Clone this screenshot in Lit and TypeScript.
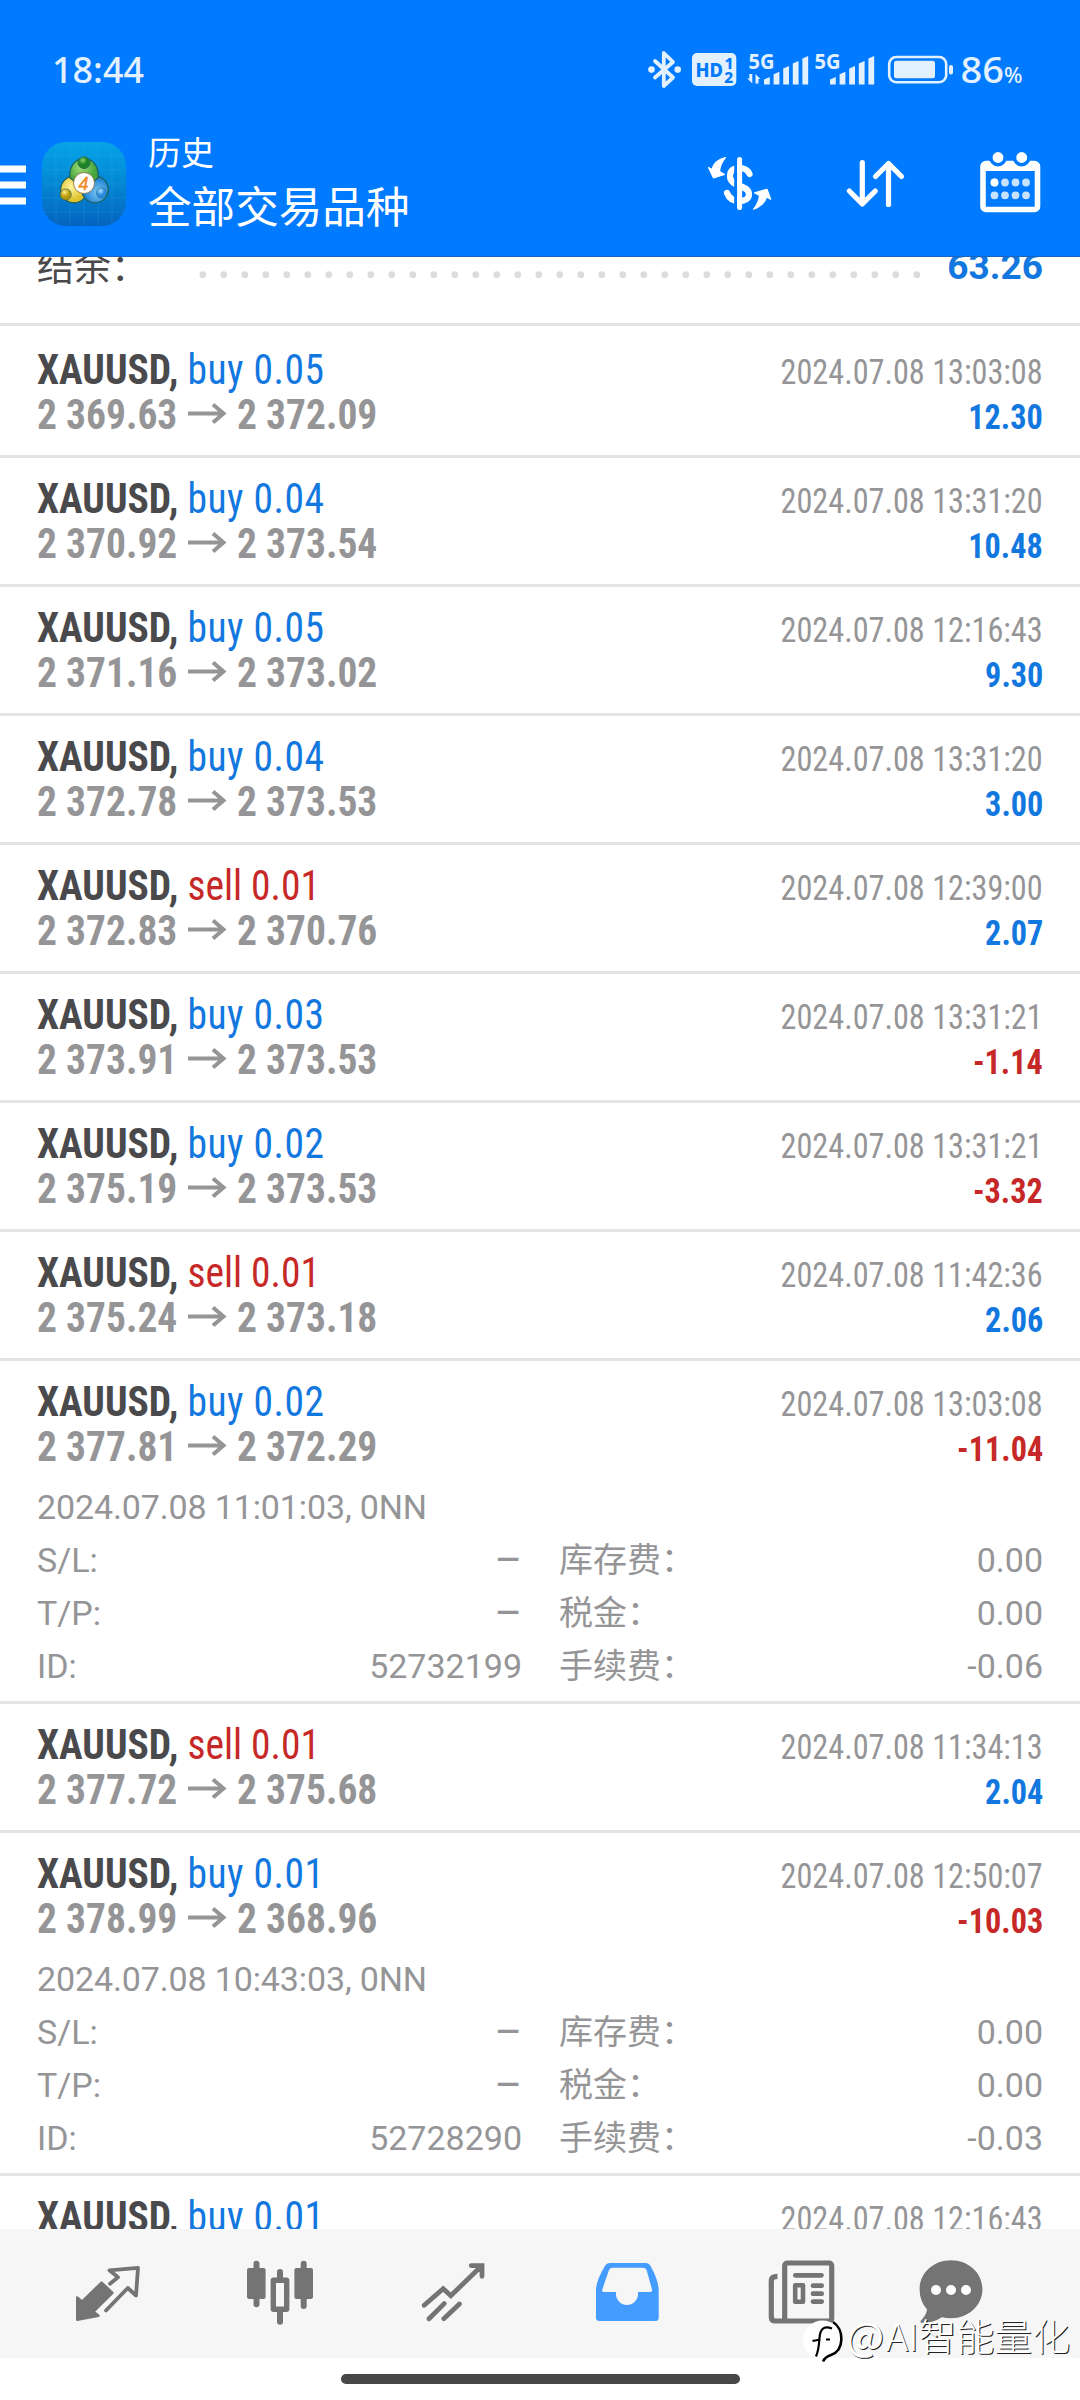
import { LitElement, html, css, svg, nothing } from "lit";
import { customElement, property } from "lit/decorators.js";

interface Detail {
  opened: string;
  id: string;
  fee: string;
}

interface Deal {
  side: "buy" | "sell";
  lots: string;
  from: string;
  to: string;
  time: string;
  profit: string;
  detail?: Detail;
}

const DEALS: Deal[] = [
  { side: "buy", lots: "0.05", from: "2 369.63", to: "2 372.09", time: "13:03:08", profit: "12.30" },
  { side: "buy", lots: "0.04", from: "2 370.92", to: "2 373.54", time: "13:31:20", profit: "10.48" },
  { side: "buy", lots: "0.05", from: "2 371.16", to: "2 373.02", time: "12:16:43", profit: "9.30" },
  { side: "buy", lots: "0.04", from: "2 372.78", to: "2 373.53", time: "13:31:20", profit: "3.00" },
  { side: "sell", lots: "0.01", from: "2 372.83", to: "2 370.76", time: "12:39:00", profit: "2.07" },
  { side: "buy", lots: "0.03", from: "2 373.91", to: "2 373.53", time: "13:31:21", profit: "-1.14" },
  { side: "buy", lots: "0.02", from: "2 375.19", to: "2 373.53", time: "13:31:21", profit: "-3.32" },
  { side: "sell", lots: "0.01", from: "2 375.24", to: "2 373.18", time: "11:42:36", profit: "2.06" },
  {
    side: "buy", lots: "0.02", from: "2 377.81", to: "2 372.29", time: "13:03:08", profit: "-11.04",
    detail: { opened: "2024.07.08 11:01:03, 0NN", id: "52732199", fee: "-0.06" },
  },
  { side: "sell", lots: "0.01", from: "2 377.72", to: "2 375.68", time: "11:34:13", profit: "2.04" },
  {
    side: "buy", lots: "0.01", from: "2 378.99", to: "2 368.96", time: "12:50:07", profit: "-10.03",
    detail: { opened: "2024.07.08 10:43:03, 0NN", id: "52728290", fee: "-0.03" },
  },
];

const PARTIAL = { side: "buy", lots: "0.01", time: "12:16:43" } as Deal;

@customElement("status-bar")
class StatusBar extends LitElement {
  static styles = css`
    :host { display: flex; justify-content: space-between; height: 112px; padding: 0 50px; }
    svg { display: block; }
    text { font-family: "Noto Sans", sans-serif; }
  `;

  private bars(x: number) {
    const tops = [77, 71.7, 66, 61, 56];
    return tops.map((t, i) => svg`<path d="M${x + i * 9.6} ${t + 2.5}l5.8 -2.5V84.5h-5.8z" />`);
  }

  render() {
    return html`
      <svg width="110" height="112" viewBox="50 0 110 112" fill="#e3f1ff">
        <text x="52" y="83" font-size="37" font-weight="550" textLength="92" lengthAdjust="spacingAndGlyphs">18:44</text>
      </svg>
      <svg width="390" height="112" viewBox="640 0 390 112" fill="#e3f1ff">
        <path d="M655 61L673 77.5L663.8 86V53L673 62L655 77.5" fill="none" stroke="#e3f1ff" stroke-width="3.8" stroke-linejoin="round" stroke-linecap="round" />
        <circle cx="651.5" cy="69.6" r="3.3" />
        <circle cx="677.7" cy="69.6" r="3.3" />
        <rect x="692" y="53" width="44.3" height="33" rx="5" />
        <g fill="#007aff" font-weight="800">
          <text x="695.5" y="76.5" font-size="19.5" textLength="27.5" lengthAdjust="spacingAndGlyphs">HD</text>
          <text x="724.5" y="69" font-size="15.5">1</text>
          <text x="724.3" y="82.5" font-size="15.5">2</text>
        </g>
        <g font-size="21" font-weight="700">
          <text x="748.5" y="68.5" textLength="26" lengthAdjust="spacingAndGlyphs">5G</text>
          <text x="814.5" y="68.5" textLength="26" lengthAdjust="spacingAndGlyphs">5G</text>
        </g>
        <path d="M752.3 74v9.5l-5 -5h2V74zM755.5 83.5V74l5 5h-2v4.5z" />
        ${this.bars(764)}${this.bars(830)}
        <rect x="889.2" y="57" width="57" height="25.2" rx="7" fill="none" stroke="#e3f1ff" stroke-width="2.6" />
        <rect x="894" y="60.7" width="41" height="17.6" rx="2.5" />
        <rect x="949" y="65" width="4" height="9.5" rx="2" />
        <text x="960.5" y="83" font-size="37" font-weight="500" textLength="43.5" lengthAdjust="spacingAndGlyphs">86</text>
        <text x="1004" y="82.5" font-size="21" font-weight="500" textLength="18.5" lengthAdjust="spacingAndGlyphs">%</text>
      </svg>
    `;
  }
}

@customElement("title-bar")
class TitleBar extends LitElement {
  static styles = css`
    :host { display: flex; height: 145px; color: #fff; }
    svg { display: block; flex: none; }
    .titles {
      flex: 1;
      display: flex;
      flex-direction: column;
      padding: 17px 0 0 18px;
      font-family: "Noto Sans CJK SC", sans-serif;
    }
    .section { font-size: 33px; line-height: 44px; }
    .scope { font-size: 43.6px; line-height: 62px; }
  `;

  render() {
    return html`
      <svg width="130" height="145" viewBox="0 112 130 145">
        <defs>
          <linearGradient id="tile" x1="0" y1="0" x2="0" y2="1">
            <stop offset="0" stop-color="#05a3e9" />
            <stop offset="0.5" stop-color="#0487d3" />
            <stop offset="1" stop-color="#0463c0" />
          </linearGradient>
          <radialGradient id="green" cx="0.4" cy="0.4"><stop offset="0" stop-color="#a4dd78" /><stop offset="1" stop-color="#45a63e" /></radialGradient>
          <radialGradient id="yellow" cx="0.4" cy="0.4"><stop offset="0" stop-color="#fff5a0" /><stop offset="1" stop-color="#dfc22c" /></radialGradient>
          <radialGradient id="sky" cx="0.6" cy="0.6"><stop offset="0" stop-color="#7fcaf5" /><stop offset="1" stop-color="#2184d2" /></radialGradient>
          <radialGradient id="ball-green" cx="0.4" cy="0.3"><stop offset="0" stop-color="#8ad46a" /><stop offset="0.7" stop-color="#1f8226" /></radialGradient>
          <radialGradient id="ball-yellow" cx="0.4" cy="0.3"><stop offset="0" stop-color="#fff08c" /><stop offset="0.8" stop-color="#b99a0c" /></radialGradient>
          <radialGradient id="ball-sky" cx="0.4" cy="0.3"><stop offset="0" stop-color="#a8e2ff" /><stop offset="0.8" stop-color="#2a8be0" /></radialGradient>
        </defs>
        <path d="M0 165.6h26v7H0zM0 181.6h26v7H0zM0 197.4h26v7H0z" fill="#fff" />
        <rect x="42" y="142" width="84" height="84" rx="24" fill="url(#tile)" />
        <path d="M56 144v80M70 142v84M84 142v84M98 142v84M112 144v80M43 156h82M42 170h84M42 184h84M42 198h84M43 212h82" stroke="#4fc3ee" stroke-opacity="0.16" stroke-width="1" />
        <g stroke="#1b5f58" stroke-width="1.2">
          <circle cx="74" cy="189.5" r="13.3" fill="url(#yellow)" />
          <circle cx="95" cy="189.5" r="13.3" fill="url(#sky)" />
          <path d="M70 178C68.500 166 76 158.500 84 158.500C92 158.500 99.500 166 98 178L93 182H75z" fill="url(#green)" />
          <circle cx="84" cy="162.7" r="6" fill="url(#ball-green)" stroke-width="0.6" />
          <circle cx="65.700" cy="194.5" r="5.6" fill="url(#ball-yellow)" stroke-width="0.600" />
          <circle cx="101.500" cy="193" r="5.2" fill="url(#ball-sky)" stroke-width="0.400" />
        </g>
        <circle cx="84" cy="183" r="10.5" fill="#fff" stroke="#8c6a3c" stroke-width="0.8" />
        <text x="83.5" y="189.5" font-family="Liberation Sans, sans-serif" font-size="18" font-style="italic" fill="#f08a24" stroke="#f08a24" stroke-width="0.4" text-anchor="middle">4</text>
      </svg>
      <div class="titles">
        <div class="section">历史</div>
        <div class="scope">全部交易品种</div>
      </div>
      <svg width="390" height="145" viewBox="690 112 390 145" fill="none" stroke="#fff" stroke-linecap="round" stroke-linejoin="round">
        <path d="M749.5 174C748 170 744 168 739 168C733 168 730 171 730 176C730 182 735 184 740 186C746 188.5 749 190 749 194.5C749 199 744 201 739 201C733 201 729 198 727 193" stroke-width="6.2" />
        <path d="M735.7 158v51" stroke="#007aff" stroke-width="3" stroke-linecap="butt" />
        <path d="M739.6 159.5v48" stroke-width="5" />
        <path d="M725.5 157.5C718 159 713 164 712 169.5L708.5 167.5L713.5 178L724.5 174.5L719.5 171.5C720 166 722 162 725.5 157.5z" fill="#fff" stroke-width="1.2" />
        <path d="M753.5 209.3C760.5 207 765.5 202 766.5 197L770.7 199.3L767 189.3L754.5 192.8L759.5 195.5C759 201 757 205 753.5 209.3z" fill="#fff" stroke-width="1.2" />
        <path d="M862.3 162.5V203M849.3 191l13 13l13 -13M888.5 204.5V164M875.5 176.5l13 -13l13 13" stroke-width="5.2" />
        <rect x="983" y="163.5" width="54.5" height="46" rx="3" stroke-width="5.6" />
        <path d="M983 164h54.5v7H983z" fill="#fff" stroke="none" />
        <g fill="#fff" stroke="#007aff" stroke-width="3.5">
          <circle cx="998" cy="157.5" r="7.2" />
          <circle cx="1021.7" cy="157.5" r="7.2" />
        </g>
        <path d="M994.5 182.5h0M1005 182.5h0M1015.5 182.5h0M1026 182.5h0M994.5 195.3h0M1005 195.3h0M1015.5 195.3h0M1026 195.3h0" stroke-width="7.8" stroke="#c6e2ff" />
        <path d="M994.5 182.5h0" stroke-width="7.8" />
      </svg>
    `;
  }
}

@customElement("deal-row")
class DealRow extends LitElement {
  @property({ attribute: false }) deal!: Deal;

  static styles = css`
    :host {
      display: block;
      flex: none;
      box-sizing: border-box;
      border-bottom: 3px solid #e3e3e4;
      padding: 18px 37px 0;
      height: 129px;
      color: #959597;
      font-family: Roboto, "Noto Sans CJK SC", sans-serif;
      white-space: nowrap;
    }
    :host(.first) { height: 132px; padding-top: 21px; }
    :host(.open) { height: 343px; }
    .line { display: flex; justify-content: space-between; align-items: baseline; height: 45px; line-height: 45px; }
    .cond { display: inline-block; font-stretch: 75%; transform: scaleX(0.94); transform-origin: 0 50%; }
    .right { transform: scaleX(0.934); transform-origin: 100% 50%; }
    .big { font-size: 42px; }
    .small { font-size: 34.5px; }
    .bold { font-weight: 700; }
    .symbol { color: #4a4a4d; font-weight: 700; }
    .buy { color: #1277de; letter-spacing: 0.55px; }
    .sell { color: #c62828; }
    .blue { color: #1277de; }
    .red { color: #c62828; }
    .prices { display: grid; grid-template-columns: 150px 50px auto; align-items: baseline; }
    .opened { font-size: 34px; line-height: 53px; padding-top: 12px; letter-spacing: -0.13px; }
    .facts { display: grid; grid-template-columns: 485px 1fr; column-gap: 37px; font-size: 34px; }
    .fact { display: flex; justify-content: space-between; line-height: 53px; height: 53px; }
    .dash { font-size: 42px; }
  `;

  private fact(label: string, value: string) {
    return html`<div class="fact"><span>${label}</span><span class=${value === "–" ? "dash" : ""}>${value}</span></div>`;
  }

  render() {
    const d = this.deal;
    return html`
      <div class="line">
        <span class="cond big"><span class="symbol">XAUUSD,</span> <span class=${d.side}>${d.side} ${d.lots}</span></span>
        <span class="cond right small">2024.07.08 ${d.time}</span>
      </div>
      ${d.profit
        ? html`
            <div class="line">
              <div class="prices">
                <span class="cond big bold">${d.from}</span>
                <svg width="40" height="26" viewBox="0 0 40 26" fill="none" stroke="#959597" stroke-width="4"><path d="M1 10.5H37M26 1.5L36.5 10.5L26 19.5" /></svg>
                <span class="cond big bold">${d.to}</span>
              </div>
              <span class="cond right small bold ${d.profit.startsWith("-") ? "red" : "blue"}">${d.profit}</span>
            </div>
          `
        : nothing}
      ${d.detail
        ? html`
            <div class="opened">${d.detail.opened}</div>
            <div class="facts">
              ${this.fact("S/L:", "–")}${this.fact("库存费：", "0.00")}
              ${this.fact("T/P:", "–")}${this.fact("税金：", "0.00")}
              ${this.fact("ID:", d.detail.id)}${this.fact("手续费：", d.detail.fee)}
            </div>
          `
        : nothing}
    `;
  }
}

@customElement("nav-bar")
class NavBar extends LitElement {
  static styles = css`
    :host {
      display: grid;
      grid-template-columns: 173px 173px 174px 175px 149px 80px;
      box-sizing: border-box;
      height: 129px;
      padding: 21px 0 0 67px;
      background: #f6f6f6;
    }
    svg { display: block; }
  `;

  private icon(x: number, body: unknown) {
    return html`<svg width="80" height="90" viewBox="${x} 90 80 90" fill="#747474" stroke-linejoin="round" stroke-linecap="round">${body}</svg>`;
  }

  render() {
    return html`
      ${this.icon(67, svg`
        <path d="M101.6 122.5L112.5 132.8L93.5 151.7L98.5 155.8L77.2 159.8V137.5L82 141.5z" stroke="#747474" stroke-width="2.4" />
        <path d="M110 123.8L118 117.3L109.5 110.3L138 107.8L136 135.5L127.8 128L106 150.5" fill="none" stroke="#747474" stroke-width="3.8" />`)}
      ${this.icon(240, svg`
        <rect x="247" y="108" width="18.6" height="31" rx="2" />
        <rect x="294.4" y="108" width="18.6" height="31" rx="2" />
        <path d="M256.5 103.7V144.3M303.7 103.7V146M280 112V120M280 150V161.7" stroke="#747474" stroke-width="6" />
        <rect x="273.3" y="120.3" width="13.4" height="29" rx="0.5" fill="none" stroke="#747474" stroke-width="5.4" />`)}
      ${this.icon(413, svg`
        <path d="M424.2 145.3L443.2 128.7L450.8 135.7L481.5 106M471.2 105.6H482V116.3M429 158.7L444.2 143.6M443.8 158.7L459.4 144" fill="none" stroke="#747474" stroke-width="4.8" stroke-linejoin="miter" />`)}
      ${this.icon(587, svg`
        <path fill="#459cff" fill-rule="evenodd" d="M609.5 103H646Q649 103 650.5 105.8Q658.7 121 658.7 130V157.5Q658.7 161 655.2 161H599.5Q596 161 596 157.5V130Q596 121 605 105.8Q606.5 103 609.5 103zM612.5 107.8Q610 107.8 609 110L602.3 129.5Q601.6 132 604 132H616V134A11 11 0 0 0 638 134V132H650Q653 132 652 129.5L646.6 110Q645.6 107.8 643 107.8z" />`)}
      ${this.icon(762, svg`
        <g fill="none" stroke="#747474" stroke-width="5.2">
          <rect x="784.7" y="103" width="47" height="58" rx="2.5" />
          <path d="M777.5 116.4Q771.3 116.4 771.3 121V157Q771.3 161 775.5 161H786" stroke-linecap="butt" />
          <path d="M795.3 115.3H821.5M813 125.7H821.7M813 133.7H821.7M813 141.6H821.7" stroke-width="4.7" />
          <rect x="795.2" y="125.2" width="7.8" height="16.6" stroke-width="4.6" />
        </g>`)}
      ${this.icon(911, svg`
        <path d="M951 100.3C968.6 100.3 982.4 113 982.4 129.3C982.4 145.5 968.6 158.3 951 158.3Q946.5 158.3 942 157.2Q932 163.5 921 162.8Q919.7 161.5 921.5 160Q926.5 154.5 927 149.5Q919.6 141.5 919.6 129.3C919.6 113 933.4 100.3 951 100.3z" />
        <g fill="#fff"><circle cx="936" cy="130" r="5" /><circle cx="951" cy="130" r="5" /><circle cx="966" cy="130" r="5" /></g>`)}
    `;
  }
}

@customElement("app-root")
class AppRoot extends LitElement {
  static styles = css`
    :host {
      display: flex;
      flex-direction: column;
      position: relative;
      width: 1080px;
      height: 2400px;
      overflow: hidden;
      background: #fff;
    }
    .header { flex: none; height: 257px; box-sizing: border-box; background: #007aff; border-bottom: 1px solid #1a64ba; }
    .list { flex: 1; min-height: 0; overflow: hidden; display: flex; flex-direction: column; }
    .balance {
      flex: none;
      display: flex;
      box-sizing: border-box;
      height: 69px;
      padding: 0 37px;
      border-bottom: 3px solid #e3e3e4;
      white-space: nowrap;
    }
    .balance-label { width: 162px; font: 37px/36px "Noto Sans CJK SC", sans-serif; margin-top: -10px; height: 40px; color: #4a4a4d; }
    .dots { flex: none; display: block; }
    .balance-value { flex: 1; text-align: right; font: 700 37px/44px Roboto, sans-serif; margin-top: -12px; color: #1277de; }
    .home { flex: none; display: flex; justify-content: center; height: 42px; box-sizing: border-box; padding-top: 16px; }
    .pill { width: 399px; height: 10px; border-radius: 5px; background: #474747; }
    .mark { position: absolute; left: 800px; top: 2312px; }
    .mark-text { font-family: "Noto Sans CJK SC", sans-serif; font-weight: 300; }
    .mark-at { font-weight: 500; }
  `;

  private markText(dx: number, dy: number, fill: string) {
    return svg`
      <g transform="translate(${dx} ${dy})" fill=${fill}>
        <text class="mark-at" x="846" y="2350.5" font-size="38" textLength="38" lengthAdjust="spacingAndGlyphs">@</text>
        <text x="886" y="2351" textLength="184" lengthAdjust="spacingAndGlyphs">AI智能量化</text>
      </g>`;
  }

  render() {
    return html`
      <div class="header">
        <status-bar></status-bar>
        <title-bar></title-bar>
      </div>
      <div class="list">
        <div class="balance">
          <div class="balance-label">结余：</div>
          <svg class="dots" width="726" height="36" viewBox="199 257 726 36">
            <path d="M202.8 274.7H920" stroke="#dcdcdc" stroke-width="6.8" stroke-linecap="round" stroke-dasharray="0 21" />
          </svg>
          <div class="balance-value">63.26</div>
        </div>
        ${DEALS.map(
          (d, i) => html`<deal-row class=${i === 0 ? "first" : d.detail ? "open" : ""} .deal=${d}></deal-row>`,
        )}
        <deal-row .deal=${PARTIAL}></deal-row>
      </div>
      <nav-bar></nav-bar>
      <div class="home"><div class="pill"></div></div>
      <svg class="mark" width="280" height="56" viewBox="800 2312 280 56">
        <circle cx="822.5" cy="2340" r="19.5" fill="#fff" />
        <path d="M833 2322C844 2329 845 2350 831 2355Q825 2357 823 2361.5" fill="none" stroke="#000" stroke-width="2.6" />
        <path d="M832 2328.5C823 2325 820 2330 819.5 2338C819 2346 818 2352 816 2356.5M812.5 2341L820.5 2339.5M826 2339.5h4" fill="none" stroke="#000" stroke-width="2.2" />
        <g class="mark-text" font-size="37">
          ${this.markText(1.1, 1.1, "#222")}${this.markText(0, 0, "#fff")}
        </g>
      </svg>
    `;
  }
}
